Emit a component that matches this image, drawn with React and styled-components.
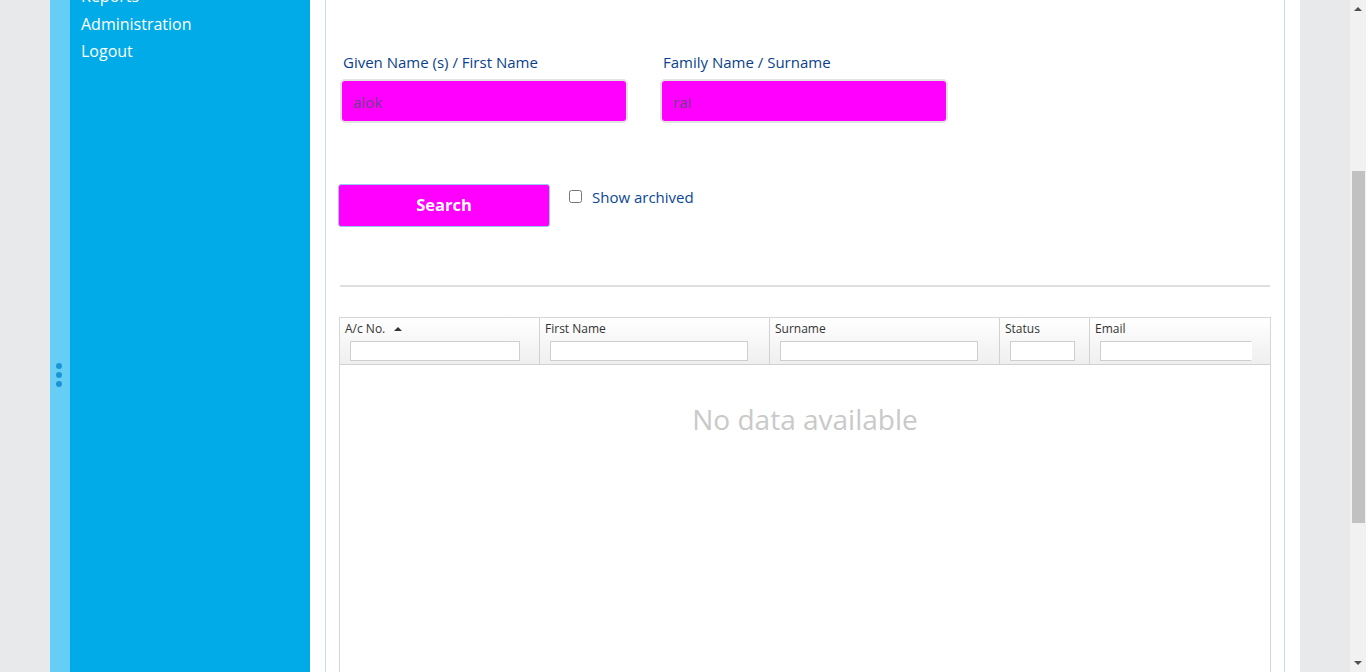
import React from 'react';
import styled, { createGlobalStyle } from 'styled-components';

const GlobalStyle = createGlobalStyle`
  html, body {
    margin: 0;
    padding: 0;
    height: 672px;
    overflow: hidden;
    font-family: "Open Sans", "Liberation Sans", sans-serif;
  }
`

const menu = ['Reports', 'Administration', 'Logout']

const columns = [
  { label: 'A/c No.', width: 200, filter: 170, sorted: true },
  { label: 'First Name', width: 230, filter: 198 },
  { label: 'Surname', width: 230, filter: 198 },
  { label: 'Status', width: 90, filter: 65 },
  { label: 'Email', width: 182, filter: 152, cut: true },
]

const App = () => {
  return (
    <Page>
      <GlobalStyle />
      <Gutter />
      <Handle>
        <Dot />
        <Dot />
        <Dot />
      </Handle>
      <Sidebar>
        <Menu>
          {menu.map(item => (
            <MenuItem key={item}>{item}</MenuItem>
          ))}
        </Menu>
      </Sidebar>

      <Main>
        <Panel>
          <FieldRow>
            <Field>
              <Label>Given Name (s) / First Name</Label>
              <TextInput defaultValue="alok" />
            </Field>
            <Field>
              <Label>Family Name / Surname</Label>
              <TextInput defaultValue="rai" />
            </Field>
          </FieldRow>

          <ActionRow>
            <SearchButton>Search</SearchButton>
            <CheckLabel>
              <Check type="checkbox" />
              Show archived
            </CheckLabel>
          </ActionRow>

          <Rule />

          <Table>
            <HeaderRow>
              {columns.map(col => (
                <HeaderCell key={col.label} $width={col.width}>
                  <HeaderTitle>
                    {col.label}
                    {col.sorted && <SortArrow />}
                  </HeaderTitle>
                  <FilterInput $width={col.filter} $cut={col.cut} />
                </HeaderCell>
              ))}
            </HeaderRow>
            <TableBody>
              <Empty>No data available</Empty>
            </TableBody>
          </Table>
        </Panel>
      </Main>

      <Gutter />
      <Scrollbar>
        <ScrollArrow $up />
        <Track>
          <Thumb />
        </Track>
        <ScrollArrow />
      </Scrollbar>
    </Page>
  )
}

const Page = styled.div`
  display: flex;
  height: 672px;
  overflow: hidden;
  background: #e8e9eb;
`

const Gutter = styled.div`
  width: 50px;
  flex-shrink: 0;
  background: #e8e9eb;
`

const Handle = styled.div`
  width: 20px;
  flex-shrink: 0;
  background: #66cdf6;
  display: flex;
  flex-direction: column;
  align-items: center;
  justify-content: center;
  gap: 3px;
  padding-top: 78px;
  box-sizing: border-box;
  padding-right: 3px;
`

const Dot = styled.span`
  width: 6px;
  height: 6px;
  border-radius: 50%;
  background: #1a94d4;
`

const Sidebar = styled.nav`
  width: 240px;
  flex-shrink: 0;
  background: #00abe7;
  overflow: hidden;
`

const Menu = styled.ul`
  list-style: none;
  margin: -17px 0 0;
  padding: 0 0 0 11px;
`

const MenuItem = styled.li`
  color: #fff;
  font-size: 16px;
  line-height: 27.5px;
`

const Main = styled.main`
  width: 990px;
  flex-shrink: 0;
  background: #fff;
  padding: 0 15px;
  box-sizing: border-box;
  display: flex;
`

const Panel = styled.section`
  flex: 1;
  border-left: 1px solid #c6ddfa;
  border-right: 1px solid #c6ddfa;
  padding: 52px 13px 0 13px;
  display: flex;
  flex-direction: column;
`

const FieldRow = styled.div`
  display: flex;
  gap: 32px;
  padding-left: 1px;
`

const Field = styled.div`
  display: flex;
  flex-direction: column;
  gap: 7px;
  flex-shrink: 0;
`

const Label = styled.label`
  color: #0a3f8c;
  font-size: 15px;
  line-height: 20px;
  padding-left: 3px;
`

const TextInput = styled.input`
  width: 288px;
  height: 44px;
  box-sizing: border-box;
  background: #ff00ff;
  border: 2px solid #e3e3e3;
  border-radius: 5px;
  padding: 2px 11px 0;
  font-family: "Open Sans", "Liberation Sans", sans-serif;
  font-size: 15px;
  color: #6a4287;
  outline: none;
`

const ActionRow = styled.div`
  display: flex;
  align-items: flex-start;
  margin-top: 61px;
  margin-left: -1px;
`

const SearchButton = styled.button`
  width: 212px;
  height: 43px;
  background: #ff00ff;
  border: 1px solid #9cc6f2;
  border-radius: 3px;
  color: #fff;
  font-family: "Open Sans", "Liberation Sans", sans-serif;
  font-weight: 700;
  font-size: 16.5px;
  padding: 0 0 2px;
`

const CheckLabel = styled.label`
  display: flex;
  align-items: center;
  gap: 10px;
  margin-left: 19px;
  margin-top: 3px;
  color: #0a4896;
  font-size: 15px;
  line-height: 20px;
`

const Check = styled.input`
  width: 13px;
  height: 13px;
  margin: -2px 0 0;
`

const Rule = styled.hr`
  margin: 58px 1px 0 1px;
  border: none;
  border-top: 2px solid #dedede;
`

const Table = styled.div`
  margin-top: 30px;
  width: 932px;
  flex: 1;
  display: flex;
  flex-direction: column;
  border: 1px solid #d6d6d6;
  border-bottom: none;
  box-sizing: border-box;
  font-family: "Open Sans", "Liberation Sans", sans-serif;
`

const HeaderRow = styled.div`
  display: flex;
  height: 46px;
  background: linear-gradient(#ffffff, #efefef);
  border-bottom: 1px solid #d2d2d2;
`

const HeaderCell = styled.div`
  width: ${p => p.$width}px;
  flex-shrink: 0;
  box-sizing: border-box;
  border-right: 1px solid #d2d2d2;
  padding: 3px 0 0 5px;
  overflow: hidden;
  &:last-child {
    border-right: none;
  }
`

const HeaderTitle = styled.div`
  display: flex;
  align-items: center;
  font-size: 12px;
  line-height: 15px;
  color: #333;
`

const SortArrow = styled.span`
  margin-left: 9px;
  width: 0;
  height: 0;
  border-left: 4px solid transparent;
  border-right: 4px solid transparent;
  border-bottom: 4px solid #333;
`

const FilterInput = styled.input`
  display: block;
  width: ${p => p.$width}px;
  height: 20px;
  box-sizing: border-box;
  margin: 5px 0 0 5px;
  border: 1px solid #cfcfcf;
  border-right-color: ${p => p.$cut ? '#fff' : '#cfcfcf'};
  background: #fff;
  outline: none;
`

const TableBody = styled.div`
  flex: 1;
  background: #fff;
  display: flex;
  justify-content: center;
  padding-top: 34px;
`

const Empty = styled.div`
  color: #c9c9c9;
  font-size: 28px;
  line-height: 40px;
  height: 40px;
`

const Scrollbar = styled.div`
  width: 16px;
  flex-shrink: 0;
  background: #f1f1f1;
  display: flex;
  flex-direction: column;
  align-items: center;
`

const ScrollArrow = styled.span`
  width: 0;
  height: 0;
  border-left: 4px solid transparent;
  border-right: 4px solid transparent;
  ${p => p.$up
    ? 'border-bottom: 4px solid #505050; border-top: 7px solid transparent; margin-bottom: 6px;'
    : 'border-top: 4px solid #505050; border-bottom: 7px solid transparent; margin-top: 6px;'}
`

const Track = styled.div`
  flex: 1;
  width: 100%;
  padding-top: 154px;
  box-sizing: border-box;
  display: flex;
  justify-content: center;
`

const Thumb = styled.div`
  width: 13px;
  height: 352px;
  background: #c1c1c1;
  margin-left: 1px;
`

export default App;
